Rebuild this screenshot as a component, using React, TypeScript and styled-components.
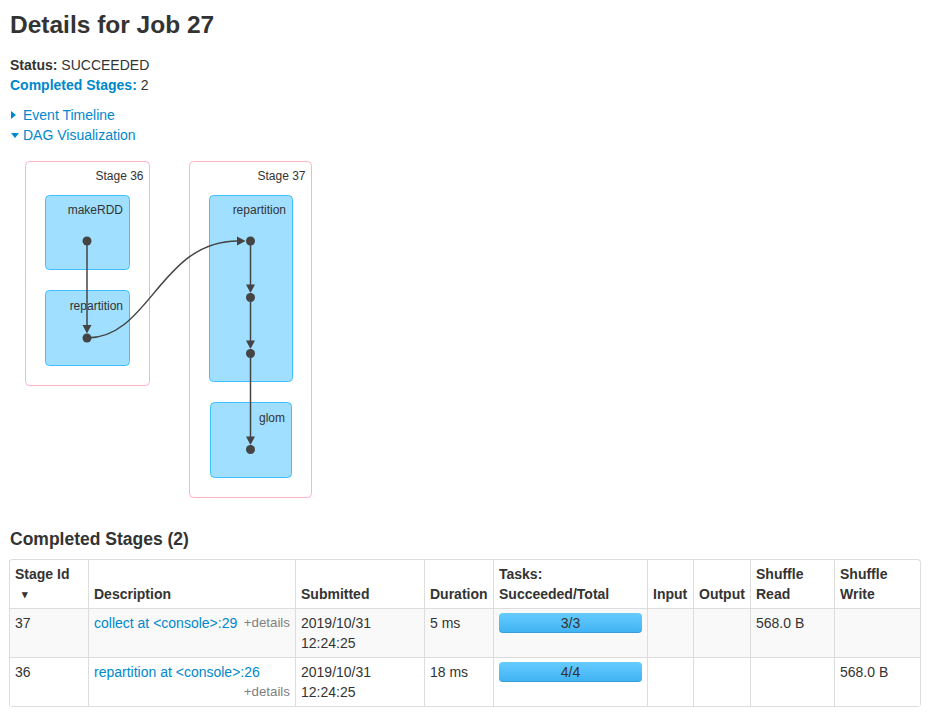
import React from "react";
import styled, { createGlobalStyle } from "styled-components";

const GlobalStyle = createGlobalStyle`
  body {
    margin: 0;
    background: #ffffff;
    color: #333333;
    font-family: "Liberation Sans", Helvetica, Arial, sans-serif;
    font-size: 14px;
    line-height: 20px;
  }
`;

const Page = styled.div`
  padding: 0 10px;
`;

const Title = styled.h3`
  margin: 5px 0 10px;
  font-size: 24.5px;
  line-height: 40px;
  font-weight: bold;
`;

const Summary = styled.ul`
  list-style: none;
  margin: 0 0 10px;
  padding: 0;
`;

const Label = styled.strong<{ $link?: boolean }>`
  color: ${(p) => (p.$link ? "#0088cc" : "inherit")};
`;

const Toggles = styled.div`
  display: flex;
  flex-direction: column;
`;

const Toggle = styled.a`
  display: flex;
  align-items: center;
  color: #0088cc;
  text-decoration: none;
  cursor: pointer;
`;

const ArrowSlot = styled.span`
  width: 12px;
  margin-left: 1px;
  display: flex;
  align-items: center;
`;

const Arrow = styled.span<{ $open?: boolean }>`
  display: inline-block;
  width: 0;
  height: 0;
  ${(p) =>
    p.$open
      ? `border-left: 4.5px solid transparent;
         border-right: 4.5px solid transparent;
         border-top: 5px solid #0088cc;`
      : `border-top: 4.5px solid transparent;
         border-bottom: 4.5px solid transparent;
         border-left: 5px solid #0088cc;`}
`;

const Graph = styled.svg`
  display: block;
`;

const SectionTitle = styled.h4`
  margin: 10px 0;
  font-size: 17.5px;
  line-height: 20px;
  font-weight: bold;
`;

const Table = styled.table`
  width: 912px;
  margin-left: -1px;
  table-layout: fixed;
  border-collapse: separate;
  border-spacing: 0;
  border: 1px solid #dddddd;
  border-left: 0;
  border-radius: 4px;
`;

const Th = styled.th`
  padding: 4px 5px;
  text-align: left;
  vertical-align: bottom;
  font-weight: bold;
  border-left: 1px solid #dddddd;
`;

const Row = styled.tr<{ $striped?: boolean }>`
  background: ${(p) => (p.$striped ? "#f9f9f9" : "#ffffff")};
`;

const Td = styled.td`
  padding: 4px 5px;
  vertical-align: top;
  border-left: 1px solid #dddddd;
  border-top: 1px solid #dddddd;
`;

const NameLink = styled.a`
  color: #0088cc;
  text-decoration: none;
`;

const ExpandDetails = styled.span`
  float: right;
  font-size: 10pt;
  color: grey;
  cursor: pointer;
`;

const SortMark = styled.span`
  display: block;
  padding-left: 7px;
  font-size: 11px;
`;

const Progress = styled.div`
  height: 20px;
  border-radius: 4px;
  background: linear-gradient(to bottom, #66ccff, #3fb2f2);
  box-shadow: inset 0 -1px 0 rgba(0, 0, 0, 0.12);
  text-align: center;
  line-height: 20px;
  color: #333333;
`;

type Box = { x: number; y: number; w: number; h: number; label: string };

const stages: Box[] = [
  { x: 25.5, y: 161.5, w: 124, h: 224, label: "Stage 36" },
  { x: 189.5, y: 161.5, w: 122, h: 336, label: "Stage 37" },
];

const ops: (Box & { ly: number })[] = [
  { x: 45.5, y: 195.5, w: 84, h: 74, label: "makeRDD", ly: 214 },
  { x: 45.5, y: 290.5, w: 84, h: 75, label: "repartition", ly: 310 },
  { x: 209.5, y: 195.5, w: 83, h: 186, label: "repartition", ly: 214 },
  { x: 210.5, y: 402.5, w: 81, h: 75, label: "glom", ly: 422 },
];

const nodes = [
  [87, 241],
  [87, 338],
  [250.5, 241],
  [250.5, 297.5],
  [250.5, 353.5],
  [250.5, 449.5],
];

const straight = [
  [0, 1],
  [2, 3],
  [3, 4],
  [4, 5],
];

const DagViz: React.FC = () => (
  <Graph width={330} height={374} viewBox="10 145 330 374">
    {stages.map((s) => (
      <g key={s.label}>
        <rect x={s.x} y={s.y} width={s.w} height={s.h} rx={4} fill="#ffffff" stroke="#ffb3c1" />
        <text x={s.x + s.w - 6} y={180} fontSize={12} fill="#333333" textAnchor="end">
          {s.label}
        </text>
      </g>
    ))}
    {ops.map((o, i) => (
      <g key={i}>
        <rect x={o.x} y={o.y} width={o.w} height={o.h} rx={4} fill="#a0dfff" stroke="#3ec0ff" />
        <text x={o.x + o.w - 6.5} y={o.ly} fontSize={12} fill="#333333" textAnchor="end">
          {o.label}
        </text>
      </g>
    ))}
    {straight.map(([a, b]) => {
      const [x, y1] = nodes[a];
      const y2 = nodes[b][1];
      return (
        <g key={`${a}-${b}`}>
          <line x1={x} y1={y1} x2={x} y2={y2 - 12} stroke="#444444" strokeWidth={1.5} />
          <polygon points={`${x - 4.5},${y2 - 13} ${x + 4.5},${y2 - 13} ${x},${y2 - 4.5}`} fill="#444444" />
        </g>
      );
    })}
    <path d="M87,338 C150,338 160,241 238,241" fill="none" stroke="#444444" strokeWidth={1.5} />
    <polygon points="237,236.5 237,245.5 245.5,241" fill="#444444" />
    {nodes.map(([x, y], i) => (
      <circle key={i} cx={x} cy={y} r={4.5} fill="#444444" />
    ))}
  </Graph>
);

const rows = [
  {
    id: "37",
    desc: "collect at <console>:29",
    submitted: "2019/10/31 12:24:25",
    duration: "5 ms",
    tasks: "3/3",
    read: "568.0 B",
    write: "",
  },
  {
    id: "36",
    desc: "repartition at <console>:26",
    submitted: "2019/10/31 12:24:25",
    duration: "18 ms",
    tasks: "4/4",
    read: "",
    write: "568.0 B",
  },
];

const colWidths = [79, 207, 129, 69, 154, 46, 57, 84, 86];

const App: React.FC = () => (
  <Page>
    <GlobalStyle />
    <Title>Details for Job 27</Title>
    <Summary>
      <li>
        <Label>Status:</Label> SUCCEEDED
      </li>
      <li>
        <Label $link>Completed Stages:</Label> 2
      </li>
    </Summary>
    <Toggles>
      <Toggle>
        <ArrowSlot>
          <Arrow />
        </ArrowSlot>
        Event Timeline
      </Toggle>
      <Toggle>
        <ArrowSlot>
          <Arrow $open />
        </ArrowSlot>
        DAG Visualization
      </Toggle>
    </Toggles>
    <DagViz />
    <SectionTitle>Completed Stages (2)</SectionTitle>
    <Table>
      <colgroup>
        {colWidths.map((w, i) => (
          <col key={i} style={{ width: w }} />
        ))}
      </colgroup>
      <thead>
        <tr>
          <Th>
            Stage Id <SortMark>&#x25BE;</SortMark>
          </Th>
          <Th>Description</Th>
          <Th>Submitted</Th>
          <Th>Duration</Th>
          <Th>Tasks: Succeeded/Total</Th>
          <Th>Input</Th>
          <Th>Output</Th>
          <Th>Shuffle Read</Th>
          <Th>Shuffle Write</Th>
        </tr>
      </thead>
      <tbody>
        {rows.map((r, i) => (
          <Row key={r.id} $striped={i % 2 === 0}>
            <Td>{r.id}</Td>
            <Td>
              <NameLink>{r.desc}</NameLink>
              <ExpandDetails>+details</ExpandDetails>
            </Td>
            <Td>{r.submitted}</Td>
            <Td>{r.duration}</Td>
            <Td>
              <Progress>{r.tasks}</Progress>
            </Td>
            <Td></Td>
            <Td></Td>
            <Td>{r.read}</Td>
            <Td>{r.write}</Td>
          </Row>
        ))}
      </tbody>
    </Table>
  </Page>
);

export default App;
